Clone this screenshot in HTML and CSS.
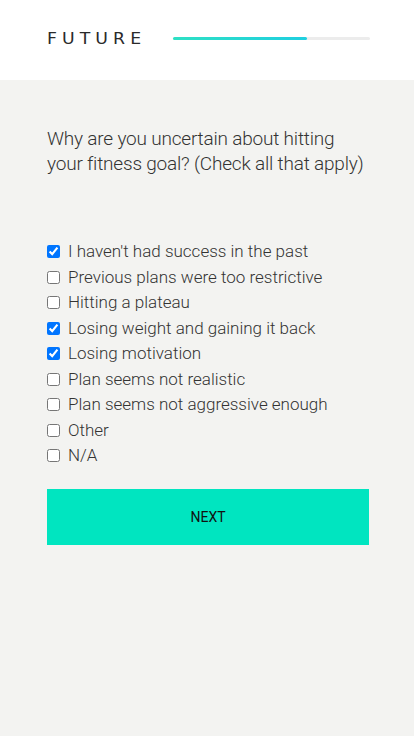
FILE: index.html
```html
<!DOCTYPE html>
<html lang="en">

<head>
  <meta charset="UTF-8">
  <meta name="viewport" content="width=device-width, initial-scale=1.0">
  <title>Future - Quiz</title>
  <link rel="stylesheet" href="styles.css">
</head>

<body>

  <header class="topbar">
    <div class="logo">FUTURE</div>
    <div class="progress">
      <div class="progress-fill" style="width: 68%"></div>
    </div>
  </header>

  <main class="quiz">
    <p class="question">Why are you uncertain about hitting<br>your fitness goal? (Check all that apply)</p>

    <ul class="options">
      <li><label><input type="checkbox" checked> I haven't had success in the past</label></li>
      <li><label><input type="checkbox"> Previous plans were too restrictive</label></li>
      <li><label><input type="checkbox"> Hitting a plateau</label></li>
      <li><label><input type="checkbox" checked> Losing weight and gaining it back</label></li>
      <li><label><input type="checkbox" checked> Losing motivation</label></li>
      <li><label><input type="checkbox"> Plan seems not realistic</label></li>
      <li><label><input type="checkbox"> Plan seems not aggressive enough</label></li>
      <li><label><input type="checkbox"> Other</label></li>
      <li><label><input type="checkbox"> N/A</label></li>
    </ul>

    <button class="next">NEXT</button>
  </main>

</body>

</html>
```

FILE: styles.css
```css
* {
  box-sizing: border-box;
}

html,
body {
  height: 100%;
}

body {
  margin: 0;
  font-family: Roboto, Arial, sans-serif;
  background: #f3f3f1;
  color: #333;
}

.topbar {
  background: #fff;
  height: 80px;
  padding: 0 44px 0 47px;
  display: flex;
  align-items: center;
  justify-content: space-between;
}

.logo {
  font-family: "DejaVu Sans", Arial, sans-serif;
  font-size: 16px;
  letter-spacing: 4.7px;
  color: #2a2a2a;
  margin-top: -4px;
  transform: scaleX(1.08);
  transform-origin: left center;
}

.progress {
  width: 197px;
  height: 3px;
  background: #ececec;
  border-radius: 2px;
  margin-top: -4px;
}

.progress-fill {
  height: 100%;
  border-radius: 2px;
  background: linear-gradient(to right, #2ee0c4, #1fcfe0);
}

.quiz {
  padding: 46px 45px 0 47px;
}

.question {
  margin: 0;
  font-size: 19px;
  font-weight: 300;
  line-height: 25px;
  white-space: nowrap;
  letter-spacing: -0.2px;
  color: #333;
}

.options {
  list-style: none;
  margin: 63px 0 0;
  padding: 0;
}

.options li {
  font-size: 17px;
  font-weight: 300;
  line-height: 25.5px;
}

.options label {
  display: flex;
  align-items: center;
  gap: 8px;
}

.options input {
  margin: 0;
  width: 13px;
  height: 13px;
}

.next {
  display: block;
  width: 100%;
  height: 56px;
  margin-top: 20px;
  border: none;
  background: #00e5c0;
  font-family: Roboto, Arial, sans-serif;
  font-size: 14px;
  color: #111;
  cursor: pointer;
}
```
